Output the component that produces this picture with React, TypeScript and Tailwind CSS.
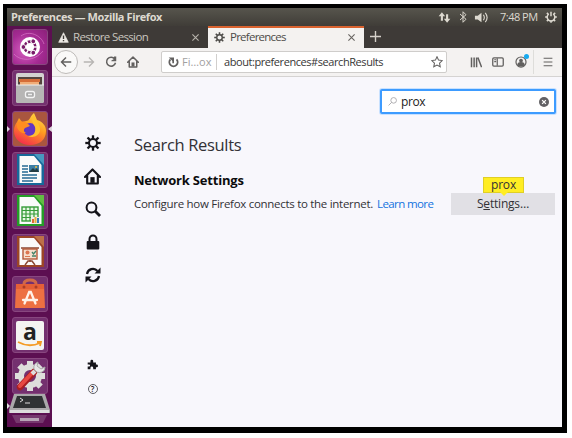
import React from 'react';

type P = { children?: React.ReactNode; className?: string };

const Icon = ({ children, className = '' }: P) => (
  <svg viewBox="0 0 16 16" className={`shrink-0 ${className}`} fill="none" stroke="currentColor" strokeWidth="1.6">
    {children}
  </svg>
);

const teeth = [0, 45, 90, 135, 180, 225, 270, 315];

const Gear = ({ className = '' }: P) => (
  <Icon className={className}>
    <circle cx="8" cy="8" r="4" strokeWidth="2" />
    {teeth.map((a) => (
      <path key={a} d="M8 0.3V4" strokeWidth="2.3" transform={`rotate(${a} 8 8)`} />
    ))}
  </Icon>
);

const House = ({ className = '' }: P) => (
  <Icon className={className}>
    <path d="M0.9 8.4L8 1.3l7.1 7.1M3 7v7.6h10V7" strokeWidth="2" strokeLinejoin="round" strokeLinecap="round" />
    <path d="M6 14V8.6h4V14z" fill="currentColor" stroke="none" />
  </Icon>
);

const Close = ({ className = '' }: P) => (
  <Icon className={className}>
    <path d="M2.5 2.5l11 11M13.5 2.5l-11 11" strokeWidth="1.9" />
  </Icon>
);

const Tile = ({ children, className = 'bg-[#74306f]' }: P) => (
  <div className={`relative h-9 w-9 shrink-0 rounded-[3px] border border-[#88477f] ${className}`}>
    <svg viewBox="0 0 36 36" className="absolute -left-px -top-px h-9 w-9 overflow-visible">{children}</svg>
  </div>
);

const Doc = ({ color, corner, children }: { color: string; corner: string; children: React.ReactNode }) => (
  <>
    <path d="M5 2h19l8 9v22H5z" fill={color} />
    <path d="M7.5 4H22l7.5 9v18h-22z" fill="#fafafa" />
    <path d="M22 2h10v11z" fill={corner} />
    {children}
  </>
);

function Launcher() {
  return (
    <div className="relative flex w-[45px] shrink-0 flex-col items-center gap-[5.1px] overflow-hidden bg-[#5c0f51] pt-[3px]">
      <Tile className="bg-[radial-gradient(circle_at_35%_60%,#d65fc0,#a52b93_55%,#8a2079)]">
        <path d="M2 25C8 32 22 33 31 22M9 7c8-6 20-1 23 8" fill="none" stroke="#e184d1" strokeWidth="1" opacity=".6" />
        <circle cx="18" cy="18" r="10" fill="#fff" />
        <circle cx="18" cy="18" r="5.4" fill="none" stroke="#791b68" strokeWidth="2.6" />
        {[0, 120, 240].map((a) => (
          <g key={a} transform={`rotate(${a} 18 18)`}>
            <path d="M22 18h5" stroke="#fff" strokeWidth="1.4" />
            <circle cx="11.4" cy="18" r="2.4" fill="#791b68" stroke="#fff" strokeWidth="1" />
          </g>
        ))}
      </Tile>
      <Tile>
        <rect x="4" y="3" width="28" height="30" rx="2" fill="#d3d2d0" />
        <rect x="6" y="7" width="24" height="10" fill="#54443d" />
        <path d="M7 9h21v3H7z" fill="#d56d38" />
        <path d="M8 12h19v3H8z" fill="#f0ad78" />
        <path d="M4 15h28v16q0 2-2 2H6q-2 0-2-2z" fill="#b7b6b5" />
        <path d="M4 15h28" stroke="#eee" />
        <rect x="13.5" y="21.5" width="9" height="6" rx="2" fill="#aaa" stroke="#f4f4f4" strokeWidth="1.3" />
        <path d="M16 24.5h4" stroke="#eee" strokeWidth="1.5" />
      </Tile>
      <Tile className="bg-[#a9563f]">
        <defs>
          <linearGradient id="fox" x1=".8" y1="0" x2=".3" y2="1">
            <stop stopColor="#ffe24a" /><stop offset=".45" stopColor="#ff9a20" /><stop offset="1" stopColor="#f52c4b" />
          </linearGradient>
        </defs>
        <path d="M5 11l2-4 3 4 4-1c4 0 4-5 8-8l3 7c6 2 9 6 9 11 0 9-7 14-16 14S2 28 2 20c0-4 1-6 3-9z" fill="url(#fox)" />
        <circle cx="18" cy="18.5" r="6.5" fill="#6236c4" />
        <path d="M5 12c5-3 10-1 13 3l-5 2c-2 2-1 4 1 5-6 1-10-4-9-10z" fill="#ff8d21" />
        <path d="M22 3c1 7 7 10 6 17-2 6-8 7-12 5 6 0 8-4 7-9-2-4-5-7-1-13z" fill="#ffc12f" />
      </Tile>
      <Tile>
        <Doc color="#17699a" corner="#4899bf">
          <path d="M10 14h6m-6 3h6m-6 3h6m-6 3h15m-15 3h15m-15 3h11" stroke="#276b94" strokeWidth="1.3" />
          <rect x="17" y="13" width="10" height="7" fill="#3b7ea6" />
          <path d="M17 20l4-4 2 2 2-2 2 4z" fill="#253d43" /><circle cx="24" cy="15" r="1" fill="#f5c13c" />
        </Doc>
      </Tile>
      <Tile>
        <Doc color="#259d27" corner="#63bd43">
          <rect x="10" y="14" width="16" height="14" fill="#e7f7e3" stroke="#379c39" strokeWidth="1.4" />
          <path d="M10 17.5h16m-16 3.5h16m-16 3.5h16M14 14v14m4-14v14m4-14v14" stroke="#379c39" strokeWidth="1.2" />
          <path d="M19 24h9v7h-9z" fill="#eee" /><path d="M20 26h2v4h-2z" fill="#df6b35" /><path d="M22.5 24h2v6h-2z" fill="#e8b13d" /><path d="M25 25h2v5h-2z" fill="#347ab7" />
        </Doc>
      </Tile>
      <Tile>
        <Doc color="#9b4527" corner="#bd7048">
          <path d="M9 14h18M18 26v2m-5 3l3-4h4l3 4" fill="none" stroke="#8c4a35" strokeWidth="1.5" />
          <rect x="11" y="15" width="14" height="10" fill="#f6dfcd" stroke="#b55a39" strokeWidth="1.4" />
          <circle cx="15.5" cy="18.5" r="2" fill="#dc7651" /><path d="M13 22.5h5" stroke="#dc7651" /><path d="M20 18l1.5 2 2.5-3m-4 5h4" stroke="#438368" strokeWidth="1.3" fill="none" />
        </Doc>
      </Tile>
      <Tile>
        <path d="M12 11V8q0-4 6-4t6 4v3" fill="none" stroke="#cf6949" strokeWidth="3" />
        <path d="M4 8h28l1 24H3z" fill="#ed7042" /><path d="M4 8h28v5H4z" fill="#e45f37" /><circle cx="12" cy="11" r="1.5" fill="#a93d28" /><circle cx="24" cy="11" r="1.5" fill="#a93d28" />
        <path d="M12.5 27.5l4.7-11.5h1.6l4.7 11.5M11 24h14" fill="none" stroke="#fff2e9" strokeWidth="2.3" strokeLinecap="round" />
      </Tile>
      <Tile>
        <rect x="4" y="4" width="28" height="29" rx="2" fill="#f4f4f2" />
        <text x="18" y="22.5" textAnchor="middle" className="fill-[#222] font-['Open_Sans',sans-serif] text-[23px] font-bold">a</text>
        <path d="M6 25q11 6 22 1m-3-1h4l-1 4" stroke="#f49b25" strokeWidth="1.8" fill="none" />
      </Tile>
      <Tile>
        <circle cx="18" cy="18" r="9" fill="none" stroke="#dededc" strokeWidth="6" />
        {teeth.map((a) => <path key={a} d="M18 3v6" stroke="#dededc" strokeWidth="6" transform={`rotate(${a} 18 18)`} />)}
        <path d="M8 29L22 14" stroke="#a91e22" strokeWidth="6.5" strokeLinecap="round" /><path d="M8 28L21 14" stroke="#e74842" strokeWidth="4" strokeLinecap="round" />
        <path d="M20 16l3-3" stroke="#ddd" strokeWidth="4" />
        <path d="M26 4q-5 2-4 7 3 5 8 3 3-1 3-5l-4 2-4-3z" fill="#e7e7e7" stroke="#aaa" />
      </Tile>
      <svg viewBox="0 0 45 34" className="absolute bottom-0 left-0 h-[34px] w-[45px]">
        <path d="M7 1h31l5 16v3H2v-3z" fill="#aaa9aa" /><path d="M10 3h25l4 12H6z" fill="#303334" /><path d="M3 17h39v3H3z" fill="#ddd" />
        <path d="M13 5l3 2-3 2m5 1h5" stroke="#ddd" fill="none" /><path d="M5 22h35l-4 8H9z" fill="#76386e" /><path d="M13 25h19v3H13z" fill="#b8a4b6" />
        <path d="M0 10l3 3-3 3z" fill="#ddd" />
      </svg>
      <svg viewBox="0 0 45 8" className="absolute left-0 top-[99px] h-2 w-[45px]"><path d="M0 1l3 3-3 3zM45 1l-4 3 4 3z" fill="#ded4dd" /></svg>
    </div>
  );
}

function TopBar() {
  return (
    <div className="flex h-[18px] shrink-0 items-center bg-gradient-to-b from-[#57554d] to-[#403d38] pl-1 pr-[5px] text-[#ddd9d0]">
      <span className="whitespace-nowrap text-[11px] font-bold tracking-[-0.4px]">Preferences — Mozilla Firefox</span>
      <div className="ml-auto flex items-center">
        <Icon className="h-[13px] w-[13px]"><path d="M4.8 12V5M11.2 4v7" strokeWidth="2.6" /><path d="M.8 6.5l4-5 4 5zM7.2 9.5l4 5 4-5z" fill="currentColor" stroke="none" /></Icon>
        <Icon className="ml-[6px] h-3 w-3"><path d="M4 4l8 7-4 4V1l4 4-8 7" strokeWidth="1.3" /></Icon>
        <Icon className="ml-[5px] h-[15px] w-[15px]"><path d="M1 6h3l4-3v10l-4-3H1z" fill="currentColor" stroke="none" /><path d="M10 5q2 3 0 6m2-8q4 5 0 10" strokeWidth="1.2" /></Icon>
        <span className="ml-[11px] w-[37px] whitespace-nowrap text-[11px] tracking-[-0.5px]">7:48 PM</span>
        <Icon className="ml-[8px] h-3 w-3"><path d="M5 4a5.1 5.1 0 1 0 6 0M8 1v6" strokeWidth="2" />{[45, 90, 135, 180, 225, 270, 315].map((a) => <path key={a} d="M8 .2v3" strokeWidth="2" transform={`rotate(${a} 8 8)`} />)}</Icon>
      </div>
    </div>
  );
}

function Tabs() {
  return (
    <div className="flex h-[22px] shrink-0 bg-[#3e3a37] text-[11.5px]">
      <div className="flex w-[156px] items-center pl-[6px] pr-[8px] text-[#c9c5bf]">
        <svg viewBox="0 0 16 16" className="h-[11px] w-[11px]"><path d="M8 1l7 14H1z" fill="#eeeae5" stroke="#eeeae5" strokeLinejoin="round" /><path d="M8 5v5m0 1.5v2" stroke="#3e3a37" strokeWidth="2" /></svg>
        <span className="ml-1 whitespace-nowrap tracking-[-0.65px]">Restore Session</span>
        <Close className="ml-auto h-[9px] w-[9px] text-[#b9b4ad]" />
      </div>
      <div className="flex w-[156px] items-center border-t-2 border-[#d9622f] bg-[#f4f2f0] pb-[2px] pl-[6px] pr-[8px] text-[#4d4b48]">
        <Gear className="h-[11px] w-[11px]" />
        <span className="ml-[5px] font-medium tracking-[-0.75px]">Preferences</span>
        <Close className="ml-auto h-[9px] w-[9px] text-[#66635f]" />
      </div>
      <Icon className="ml-[6px] mt-[5px] h-[11px] w-[11px] text-[#d5d0ca]"><path d="M8 0v16M0 8h16" strokeWidth="2" /></Icon>
    </div>
  );
}

function Toolbar() {
  return (
    <div className="flex h-[29px] shrink-0 items-center border-b border-[#d5d3d2] bg-[#f4f2f1] pl-[2px] pr-[9px] text-[#62605f]">
      <span className="flex h-6 w-6 shrink-0 items-center justify-center rounded-full border border-[#bebbb9] bg-[#faf9f8]"><Icon className="h-3 w-3"><path d="M15 8H2m6-6L2 8l6 6" strokeWidth="1.9" /></Icon></span>
      <Icon className="ml-[5px] h-3 w-3 text-[#b7b5b3]"><path d="M1 8h13M8 2l6 6-6 6" strokeWidth="1.8" /></Icon>
      <Icon className="ml-[10px] h-3 w-3"><path d="M13 4A6 6 0 1 0 14 9" strokeWidth="2" /><path d="M8.5 7V6l3.5-2V.5h3V7z" fill="currentColor" stroke="none" /></Icon>
      <House className="ml-[10px] h-3 w-3" />
      <div className="ml-[22px] flex h-[22px] w-[286px] shrink-0 items-center rounded-[2px] border border-[#cfcdcb] bg-white pl-[6px] pr-[3px] text-[11px]">
        <Icon className="h-[11px] w-[11px]"><path d="M3.5 3.5A6 6 0 1 0 12.5 3.5" strokeWidth="2.7" /><path d="M7.5 9V3" strokeWidth="2.4" /><path d="M1 .8h7.7v7z" fill="currentColor" stroke="none" /></Icon>
        <span className="ml-[3px] w-[26px] whitespace-nowrap text-[#a2a09f]">Fi…ox</span>
        <span className="ml-[8px] h-4 w-px bg-[#d1cfcd]" />
        <span className="ml-[7px] whitespace-nowrap font-medium tracking-[-0.43px] text-[#373635]">about:preferences#searchResults</span>
        <Icon className="ml-auto h-3 w-3"><path d="M8 1l2.1 4.5 4.9.6-3.6 3.4.9 4.9L8 12l-4.3 2.4.9-4.9L1 6.1l4.9-.6z" strokeWidth="1.4" /></Icon>
      </div>
      <Icon className="ml-[23px] h-3 w-3"><path d="M2 2v13M5.5 2v13M8.8 2v13M10.5 2l5 13" strokeWidth="2" /></Icon>
      <Icon className="ml-[10px] h-3 w-3"><rect x="1" y="2.5" width="14" height="11" rx="1.5" strokeWidth="1.7" /><path d="M7 3v10M3 5h2.5m-2.5 2.5h2.5" /></Icon>
      <div className="relative ml-[11px] h-3 w-3"><Icon className="h-3 w-3"><circle cx="8" cy="8" r="6.7" /><circle cx="8" cy="6" r="2.5" fill="currentColor" stroke="none" /><path d="M3 12q0-4 5-4t5 4l-2 2H5z" fill="currentColor" stroke="none" /></Icon><span className="absolute -right-[2px] -top-[2px] h-[5px] w-[5px] rounded-full bg-[#16a9ef]" /></div>
      <span className="ml-[6px] h-6 w-px bg-[#deddda]" />
      <Icon className="ml-auto h-[10px] w-[10px]"><path d="M1 2h14M1 8h14M1 14h14" strokeWidth="1.8" /></Icon>
    </div>
  );
}

export default function App() {
  return (
    <div className="h-[438px] w-[572px] bg-white pl-[3px] pt-1 font-['Open_Sans','Noto_Sans',sans-serif]">
      <div className="flex h-[429px] w-[564px] flex-col overflow-hidden border-[4px] border-b-[6px] border-r-[5px] border-black bg-[#f8f7fc]">
        <TopBar />
        <div className="flex min-h-0 flex-1">
          <Launcher />
          <div className="flex min-w-0 flex-1 flex-col">
            <Tabs />
            <Toolbar />
            <div className="flex min-h-0 flex-1 text-[#323136]">
              <nav className="flex w-[81px] shrink-0 flex-col items-center pt-[58px] text-[#15141a]">
                <Gear className="h-4 w-4" />
                <House className="mt-[17px] h-[17px] w-[17px]" />
                <Icon className="mt-[16px] h-4 w-4"><circle cx="6.5" cy="6.5" r="4.9" strokeWidth="2" /><path d="M10 10l5 5" strokeWidth="2.8" /></Icon>
                <Icon className="mt-[17px] h-4 w-4"><rect x="1.7" y="7" width="12.6" height="8.6" rx="1" fill="currentColor" stroke="none" /><path d="M4.5 8V5a3.5 3.5 0 0 1 7 0v3" strokeWidth="2" /></Icon>
                <Icon className="mt-[17px] h-4 w-4"><path d="M2 7a6 6 0 0 1 10.5-3M14 9A6 6 0 0 1 3.5 12" strokeWidth="2.2" /><path d="M15.5.5v6h-6zM.5 15.5v-6h6z" fill="currentColor" stroke="none" /></Icon>
                <svg viewBox="0 0 16 16" className="mt-[76px] h-[11px] w-[11px]"><path d="M1 5h4V3a2 2 0 1 1 4 0v2h4v3h1a2 2 0 1 1 0 4h-1v3H9v-2a2 2 0 0 0-4 0v2H1v-4h2a1.5 1.5 0 0 0 0-3H1z" fill="currentColor" /></svg>
                <span className="mt-[14px] flex h-[10px] w-[10px] items-center justify-center rounded-full border border-[#5f5e63] text-[8px] font-semibold leading-none">?</span>
              </nav>
              <main className="flex min-w-0 flex-1 flex-col pl-px pr-[7px]">
                <div className="-mr-px mt-[12px] flex h-[25px] w-[176px] shrink-0 items-center self-end rounded-[2px] border-2 border-[#3d9bff] bg-white pl-[6px] pr-[5px] shadow-[0_0_0_1px_#c8e1ff]">
                  <Icon className="h-[9px] w-[9px] text-[#a8a7aa]"><circle cx="10" cy="6" r="5" /><path d="M6.5 9.5L1 15" /></Icon>
                  <span className="ml-[4px] text-[12px] font-medium tracking-[-0.4px] text-[#222]">prox</span>
                  <svg viewBox="0 0 16 16" className="ml-auto h-[10px] w-[10px]"><circle cx="8" cy="8" r="8" fill="#626165" /><path d="M5 5l6 6m0-6l-6 6" stroke="#fff" strokeWidth="2" /></svg>
                </div>
                <h1 className="mt-[19px] whitespace-nowrap text-[16.5px] leading-6 tracking-[-0.33px]">Search Results</h1>
                <h2 className="mt-[13px] whitespace-nowrap text-[13px] font-bold leading-5 tracking-[-0.2px] text-[#0c0c0d]">Network Settings</h2>
                <div className="mt-[3px] flex h-[22px] items-center whitespace-nowrap text-[11.5px] font-medium">
                  <span className="w-[243px] tracking-[-0.29px]">Configure how Firefox connects to the internet.</span>
                  <a className="tracking-[-0.6px] text-[#1473df]">Learn more</a>
                  <div className="relative ml-auto flex h-[22px] w-[104px] items-center justify-center bg-[#e1e0e5] text-[12px] tracking-[-0.2px]">
                    <span>S<span className="underline">e</span>ttings…</span>
                    <span className="absolute left-[32px] top-[-16px] flex h-4 w-[41px] items-center justify-center border border-[#e0cf25] bg-[#ffed23] after:absolute after:top-[14px] after:border-x-[4px] after:border-t-[4px] after:border-x-transparent after:border-t-[#ffed23] after:content-['']">prox</span>
                  </div>
                </div>
              </main>
            </div>
          </div>
        </div>
      </div>
    </div>
  );
}
